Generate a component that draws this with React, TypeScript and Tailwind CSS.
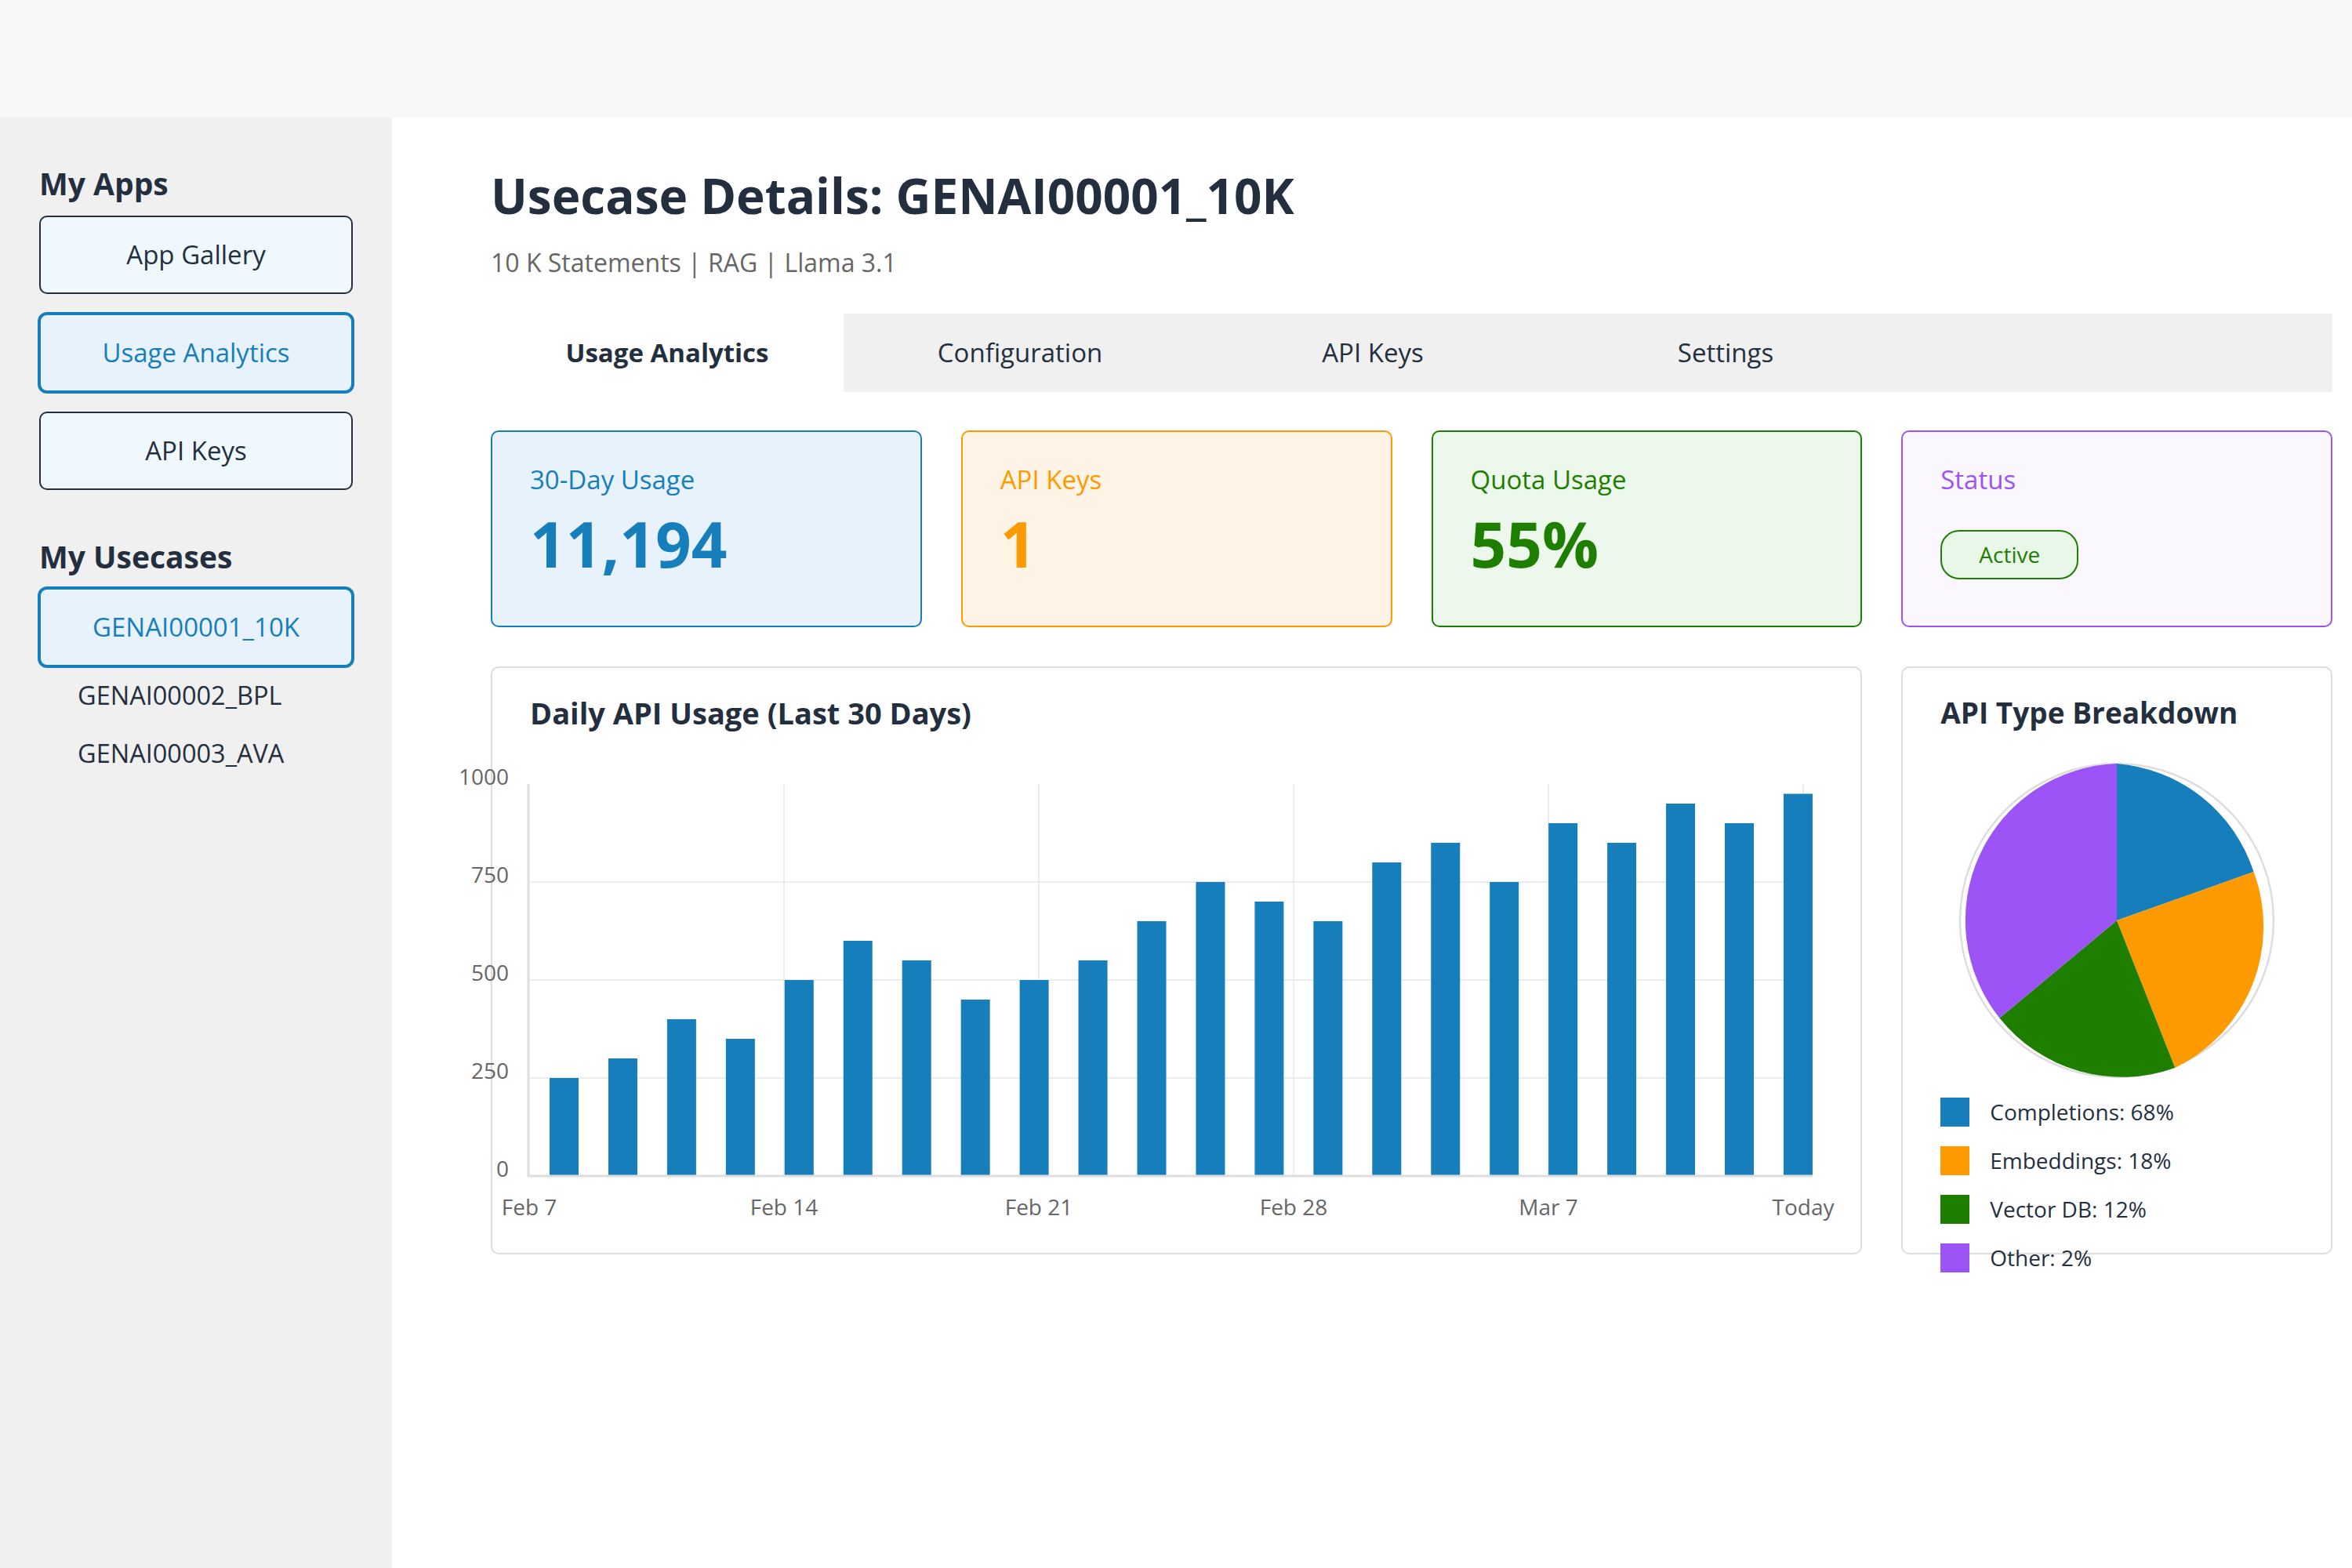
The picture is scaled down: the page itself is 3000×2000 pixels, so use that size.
const sideApps = [
  { label: "App Gallery", active: false },
  { label: "Usage Analytics", active: true },
  { label: "API Keys", active: false },
];

const tabs = ["Usage Analytics", "Configuration", "API Keys", "Settings"];

const bars = [250, 300, 400, 350, 500, 600, 550, 450, 500, 550, 650, 750, 700, 650, 800, 850, 750, 900, 850, 950, 900, 975];

const xTicks = [
  { x: 49, label: "Feb 7" },
  { x: 374, label: "Feb 14" },
  { x: 699, label: "Feb 21" },
  { x: 1024, label: "Feb 28" },
  { x: 1349, label: "Mar 7" },
  { x: 1674, label: "Today" },
];

const legend = [
  { color: "bg-[#167fbb]", label: "Completions: 68%" },
  { color: "bg-[#fd9a00]", label: "Embeddings: 18%" },
  { color: "bg-[#1e7e00]", label: "Vector DB: 12%" },
  { color: "bg-[#9c54f6]", label: "Other: 2%" },
];

function SideButton({ label, active }: { label: string; active: boolean }) {
  return (
    <button
      className={
        active
          ? "h-[100px] w-[400px] rounded-[10px] border-2 border-[#167fbb] bg-[#e8f2fd] text-[33px] text-[#167fbb] ring-2 ring-[#167fbb]"
          : "h-[100px] w-[400px] rounded-[10px] border-2 border-[#232f3e] bg-[#f0f8ff] text-[33px] text-[#232f3e]"
      }
    >
      {label}
    </button>
  );
}

function UsageChart() {
  const y = (v: number) => 550 - v / 2;
  return (
    <svg width={1749} height={620} className="-ml-[50px] mt-[17px] block overflow-visible">
      {[250, 500, 750].map((v) => (
        <line key={v} x1={48} x2={1686} y1={y(v)} y2={y(v)} stroke="#ececec" strokeWidth={2} />
      ))}
      {xTicks.slice(1).map((t) => (
        <line key={t.x} x1={t.x} x2={t.x} y1={50} y2={550} stroke="#ececec" strokeWidth={2} />
      ))}
      {bars.map((v, i) => (
        <rect key={i} x={75 + i * 74.95} y={y(v)} width={37} height={v / 2} fill="#167fbb" />
      ))}
      <line x1={48} x2={48} y1={50} y2={551} stroke="#dddddd" strokeWidth={3} />
      <line x1={47} x2={1686} y1={550} y2={550} stroke="#dddddd" strokeWidth={3} />
      {[0, 250, 500, 750, 1000].map((v) => (
        <text key={v} x={23} y={y(v) + 0.5} textAnchor="end" fontSize={28} fill="#666666">
          {v}
        </text>
      ))}
      {xTicks.map((t) => (
        <text key={t.label} x={t.x} y={600} textAnchor="middle" fontSize={28} fill="#666666">
          {t.label}
        </text>
      ))}
    </svg>
  );
}

function PieChart() {
  // arc endpoints measured off the original render
  const c = "202 202";
  return (
    <svg width={404} height={404} className="mx-auto mt-[41px] block overflow-visible">
      <circle cx={202} cy={202} r={200} fill="none" stroke="#dddddd" strokeWidth={2.5} />
      <path d={`M ${c} L 202 2 A 200 200 0 0 1 376.6 140.1 Z`} fill="#167fbb" />
      <path d={`M ${c} L 376.6 140.1 A 200 200 0 0 1 276.3 390 Z`} fill="#fd9a00" />
      <path d={`M ${c} L 276.3 390 A 200 200 0 0 1 52.4 326.5 Z`} fill="#1e7e00" />
      <path d={`M ${c} L 52.4 326.5 A 200 200 0 0 1 202 2 Z`} fill="#9c54f6" />
    </svg>
  );
}

export default function App() {
  return (
    <div className="flex min-h-[2000px] w-full flex-col bg-white font-['Open_Sans',sans-serif] text-[#232f3e]">
      <header className="h-[150px] w-full bg-[#f8f8f8]"></header>

      <div className="flex flex-1">
        <aside className="w-[500px] shrink-0 bg-[#f0f0f0] px-[50px] pt-[61px]">
          <h2 className="text-[39px] font-bold leading-[1.2]">My Apps</h2>
          <div className="mt-[17px] flex flex-col gap-[25px]">
            {sideApps.map((b) => (
              <SideButton key={b.label} label={b.label} active={b.active} />
            ))}
          </div>

          <h2 className="mt-[62px] text-[39px] font-bold leading-[1.2]">My Usecases</h2>
          <div className="mt-[16px]">
            <SideButton label="GENAI00001_10K" active={true} />
          </div>
          <div className="pl-[49px] text-[32.5px]">
            <div className="py-[13px] leading-[48px]">GENAI00002_BPL</div>
            <div className="py-[13px] leading-[48px]">GENAI00003_AVA</div>
          </div>
        </aside>

        <main className="flex-1 pl-[126px] pr-[25px] pt-[61px]">
          <h1 className="text-[62px] font-bold leading-[76px]">Usecase Details: GENAI00001_10K</h1>
          <p className="mt-[23px] text-[32px] leading-[50px] text-[#666666]">10 K Statements | RAG | Llama 3.1</p>

          <div className="mt-[40px] flex h-[100px] bg-[#f0f0f0]">
            {tabs.map((t, i) => (
              <div
                key={t}
                className={
                  i === 0
                    ? "flex w-[450px] items-center justify-center bg-white text-[33px] font-bold"
                    : "flex w-[450px] items-center justify-center text-[33px]"
                }
              >
                {t}
              </div>
            ))}
          </div>

          <div className="mt-[49px] grid grid-cols-4 gap-[50px]">
            <div className="h-[251px] rounded-[10px] border-2 border-[#167fbb] bg-[#e8f2fd] px-[48px] pt-[36px] text-[#167fbb]">
              <div className="text-[33px] leading-[1.5]">30-Day Usage</div>
              <div className="mt-[8px] text-[80px] font-bold leading-[1.2]">11,194</div>
            </div>
            <div className="h-[251px] rounded-[10px] border-2 border-[#fd9a00] bg-[#fff3e6] px-[48px] pt-[36px] text-[#fd9a00]">
              <div className="text-[33px] leading-[1.5]">API Keys</div>
              <div className="mt-[8px] text-[80px] font-bold leading-[1.2]">1</div>
            </div>
            <div className="h-[251px] rounded-[10px] border-2 border-[#1e7e00] bg-[#ebf8eb] px-[48px] pt-[36px] text-[#1e7e00]">
              <div className="text-[33px] leading-[1.5]">Quota Usage</div>
              <div className="mt-[8px] text-[80px] font-bold leading-[1.2]">55%</div>
            </div>
            <div className="h-[251px] rounded-[10px] border-2 border-[#9c54f6] bg-[#faf7ff] px-[48px] pt-[36px] text-[#9c54f6]">
              <div className="text-[33px] leading-[1.5]">Status</div>
              <div className="mt-[39px] flex h-[63px] w-[176px] items-center justify-center rounded-[24px] border-2 border-[#1e7e00] bg-[#e9f7e9] text-[28px] text-[#1e7e00]">
                Active
              </div>
            </div>
          </div>

          <div className="mt-[50px] grid grid-cols-4 gap-[50px]">
            <div className="col-span-3 h-[750px] rounded-[10px] border-2 border-[#dddddd] px-[48px] pt-[35px]">
              <h3 className="text-[38px] font-bold leading-[1.2]">Daily API Usage (Last 30 Days)</h3>
              <UsageChart />
            </div>
            <div className="h-[750px] rounded-[10px] border-2 border-[#dddddd] px-[48px] pt-[35px]">
              <h3 className="text-[37px] font-bold leading-[1.2]">API Type Breakdown</h3>
              <PieChart />
              <div className="mt-[24px] flex flex-col gap-[25px]">
                {legend.map((l) => (
                  <div key={l.label} className="flex h-[37px] items-center gap-[26px]">
                    <span className={`h-[37px] w-[37px] shrink-0 ${l.color}`}></span>
                    <span className="text-[28px] leading-[37px]">{l.label}</span>
                  </div>
                ))}
              </div>
            </div>
          </div>
        </main>
      </div>
    </div>
  );
}
